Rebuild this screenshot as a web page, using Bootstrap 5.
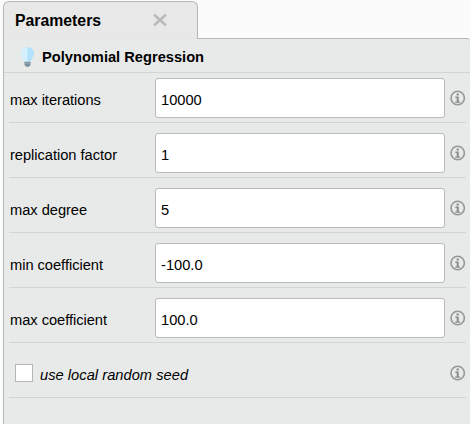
<!DOCTYPE html>
<html lang="en">
<head>
<meta charset="utf-8">
<title>Parameters</title>
<link href="https://cdn.jsdelivr.net/npm/bootstrap@5.3.0/dist/css/bootstrap.min.css" rel="stylesheet">
<style>
html, body { height: 100%; overflow: hidden; }
body { background: #fbfbfb; color: #000; font-family: "Liberation Sans", Arial, sans-serif; font-size: 14.67px; line-height: 18px; padding: 1px 0 0 3px; }
.tab-head { width: 195px; height: 38px; margin-bottom: -1px; background: #e8e8e8; border: 1px solid #b4b8b6; border-bottom: 0; border-radius: 6px 6px 0 0; padding: 0 0 0 11px; font-size: 15.8px; position: relative; }
.tab-close { margin: -2px 0 0 51.5px; }
.panel { background: #e8eae9; border: 1px solid #b4b8b6; border-right: 0; border-bottom: 0; border-top-right-radius: 3px; }
.tab-edge { height: 1px; width: 193px; margin-top: -1px; background: #e3e4e4; position: relative; }
.op-title { height: 34px; border-bottom: 1px solid #d3d5d4; padding: 2px 0 0 17px; }
.op-title span { margin-left: 8px; }
.param { height: 55px; margin: 0 4px 0 5px; padding-top: 6px; border-bottom: 1px solid #d3d5d4; }
.param:first-of-type { height: 50px; padding-top: 0; }
.param label { width: 146px; padding-left: 1px; margin-top: 4px; letter-spacing: -.03px; }
.param .form-control { width: 290px; height: 40px; border: 1px solid #b9bcba; border-radius: 3px; color: #000; font-size: 14.67px; line-height: 18px; padding: 4px 5px 0; box-shadow: none; }
.param svg { margin: 0 0 0 5px; }
.seed-box.form-check-input { width: 18px; height: 18px; border: 1px solid #b4b6b5; border-radius: 0; margin: 0 0 0 6px; background-color: #fff; }
.param label.seed-label { width: auto; padding-left: 7px; letter-spacing: .03px; }
</style>
</head>
<body class="d-flex flex-column">
<svg class="d-none">
  <symbol id="info" viewBox="0 0 16 16">
    <circle cx="7.7" cy="8" r="6.7" fill="none" stroke="#969897" stroke-width="1.6"/>
    <path d="M6.6 3.4h2.2v2H6.6zM5.4 6.6h3.3v4.8h1.4v1.3H5.2v-1.3h1.5V7.9H5.4z" fill="#8a8c8b"/>
  </symbol>
</svg>
<div class="tab-head d-flex align-items-center fw-bold">Parameters
  <svg class="tab-close" width="14" height="14" viewBox="0 0 14 14"><path d="M1.2 1.8l11.6 10.4M12.8 1.8L1.2 12.2" stroke="#b8bab9" stroke-width="2.5"/></svg>
</div>
<main class="panel flex-grow-1">
  <div class="tab-edge"></div>
  <div class="op-title d-flex align-items-center fw-bold">
    <svg width="13" height="20" viewBox="0 0 13 20">
      <path d="M6.5 0C2.7 0 0 2.8 0 6.4c0 3 2.4 4.3 3.2 8.2h6.6c.8-3.9 3.2-5.2 3.2-8.2C13 2.8 10.3 0 6.5 0z" fill="#b3e3fc"/>
      <path d="M6.5 0C2.7 0 0 2.8 0 6.4c0 3 2.4 4.3 3.2 8.2h3.3z" fill="#d5effc"/>
      <path d="M3.5 14.8h6V18l-1.6 1.8H5.1L3.5 18z" fill="#78909c"/><path d="M3.5 16.3h6" stroke="#9db0ba" stroke-width=".8"/>
    </svg>
    <span>Polynomial Regression</span>
  </div>
  <form>
    <div class="param d-flex align-items-center"><label for="p1">max iterations</label><input id="p1" class="form-control" value="10000"><svg width="16" height="16"><use href="#info"/></svg></div>
    <div class="param d-flex align-items-center"><label for="p2">replication factor</label><input id="p2" class="form-control" value="1"><svg width="16" height="16"><use href="#info"/></svg></div>
    <div class="param d-flex align-items-center"><label for="p3">max degree</label><input id="p3" class="form-control" value="5"><svg width="16" height="16"><use href="#info"/></svg></div>
    <div class="param d-flex align-items-center"><label for="p4">min coefficient</label><input id="p4" class="form-control" value="-100.0"><svg width="16" height="16"><use href="#info"/></svg></div>
    <div class="param d-flex align-items-center"><label for="p5">max coefficient</label><input id="p5" class="form-control" value="100.0"><svg width="16" height="16"><use href="#info"/></svg></div>
    <div class="param d-flex align-items-center"><input id="p6" type="checkbox" class="form-check-input seed-box"><label for="p6" class="seed-label fst-italic">use local random seed</label><svg class="ms-auto" width="16" height="16"><use href="#info"/></svg></div>
  </form>
</main>
<script src="https://cdn.jsdelivr.net/npm/bootstrap@5.3.0/dist/js/bootstrap.bundle.min.js"></script>
</body>
</html>
